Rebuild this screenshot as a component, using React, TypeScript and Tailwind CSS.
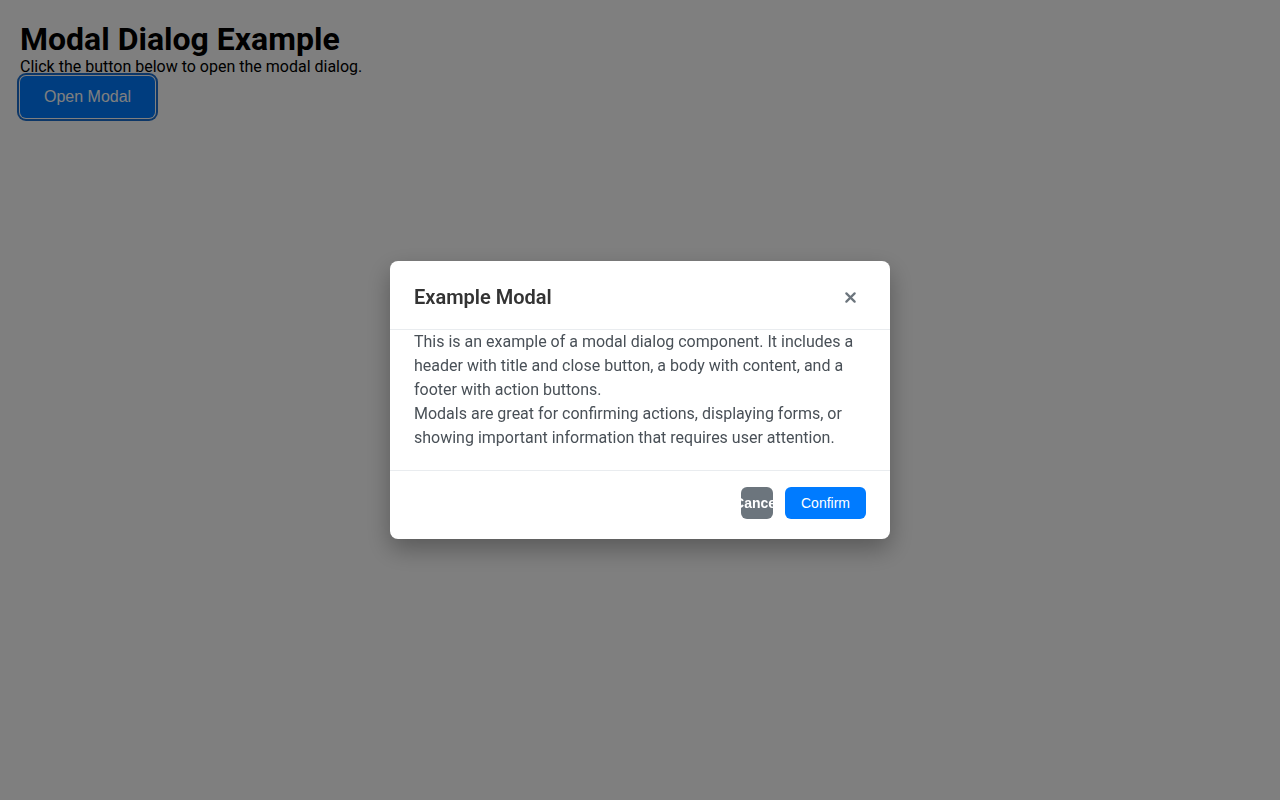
export default function App() {
  return (
    <div className="relative min-h-[800px] bg-white p-5 font-['Roboto',sans-serif] text-black">
      <h1 className="m-0 text-[32px] font-bold leading-[38px]">Modal Dialog Example</h1>
      <p className="m-0 text-base leading-[18px]">Click the button below to open the modal dialog.</p>
      <button className="rounded-md bg-[#007bff] px-6 py-3 font-['Liberation_Sans',Arial,sans-serif] text-base leading-[18px] text-white shadow-[0_0_0_1px_#ffffff,0_0_0_3px_#1b6fd1]">
        Open Modal
      </button>

      <div className="fixed inset-0 flex items-center justify-center bg-black/50">
        <div className="w-[500px] rounded-lg bg-white shadow-[0_10px_25px_rgba(0,0,0,0.3)]">
          <div className="flex items-center justify-between border-b border-[#e9ecef] pb-5 pl-6 pr-6 pt-6">
            <h2 className="m-0 text-[20px] font-semibold leading-6 text-[#333333]">Example Modal</h2>
            <button className="flex h-6 w-8 items-center justify-center text-[#6c757d]">
              <svg width="11" height="11" viewBox="0 0 12 12" fill="none">
                <path d="M1.5 1.5L10.5 10.5M10.5 1.5L1.5 10.5" stroke="currentColor" strokeWidth="2.4" strokeLinecap="round" />
              </svg>
            </button>
          </div>
          <div className="px-6 pb-5 text-base leading-6 text-[#495057]">
            <p className="m-0">
              This is an example of a modal dialog component. It includes a header with title and close button, a body with content, and a footer with action buttons.
            </p>
            <p className="m-0">
              Modals are great for confirming actions, displaying forms, or showing important information that requires user attention.
            </p>
          </div>
          <div className="flex justify-end gap-3 border-t border-[#e9ecef] px-6 pb-5 pt-4">
            <button className="flex h-8 w-8 items-center justify-center overflow-hidden whitespace-nowrap rounded-md bg-[#6c757d] font-['Liberation_Sans',Arial,sans-serif] text-sm font-bold text-white">
              Cancel
            </button>
            <button className="h-8 rounded-md bg-[#007bff] px-4 font-['Liberation_Sans',Arial,sans-serif] text-sm font-medium text-white">
              Confirm
            </button>
          </div>
        </div>
      </div>
    </div>
  );
}
